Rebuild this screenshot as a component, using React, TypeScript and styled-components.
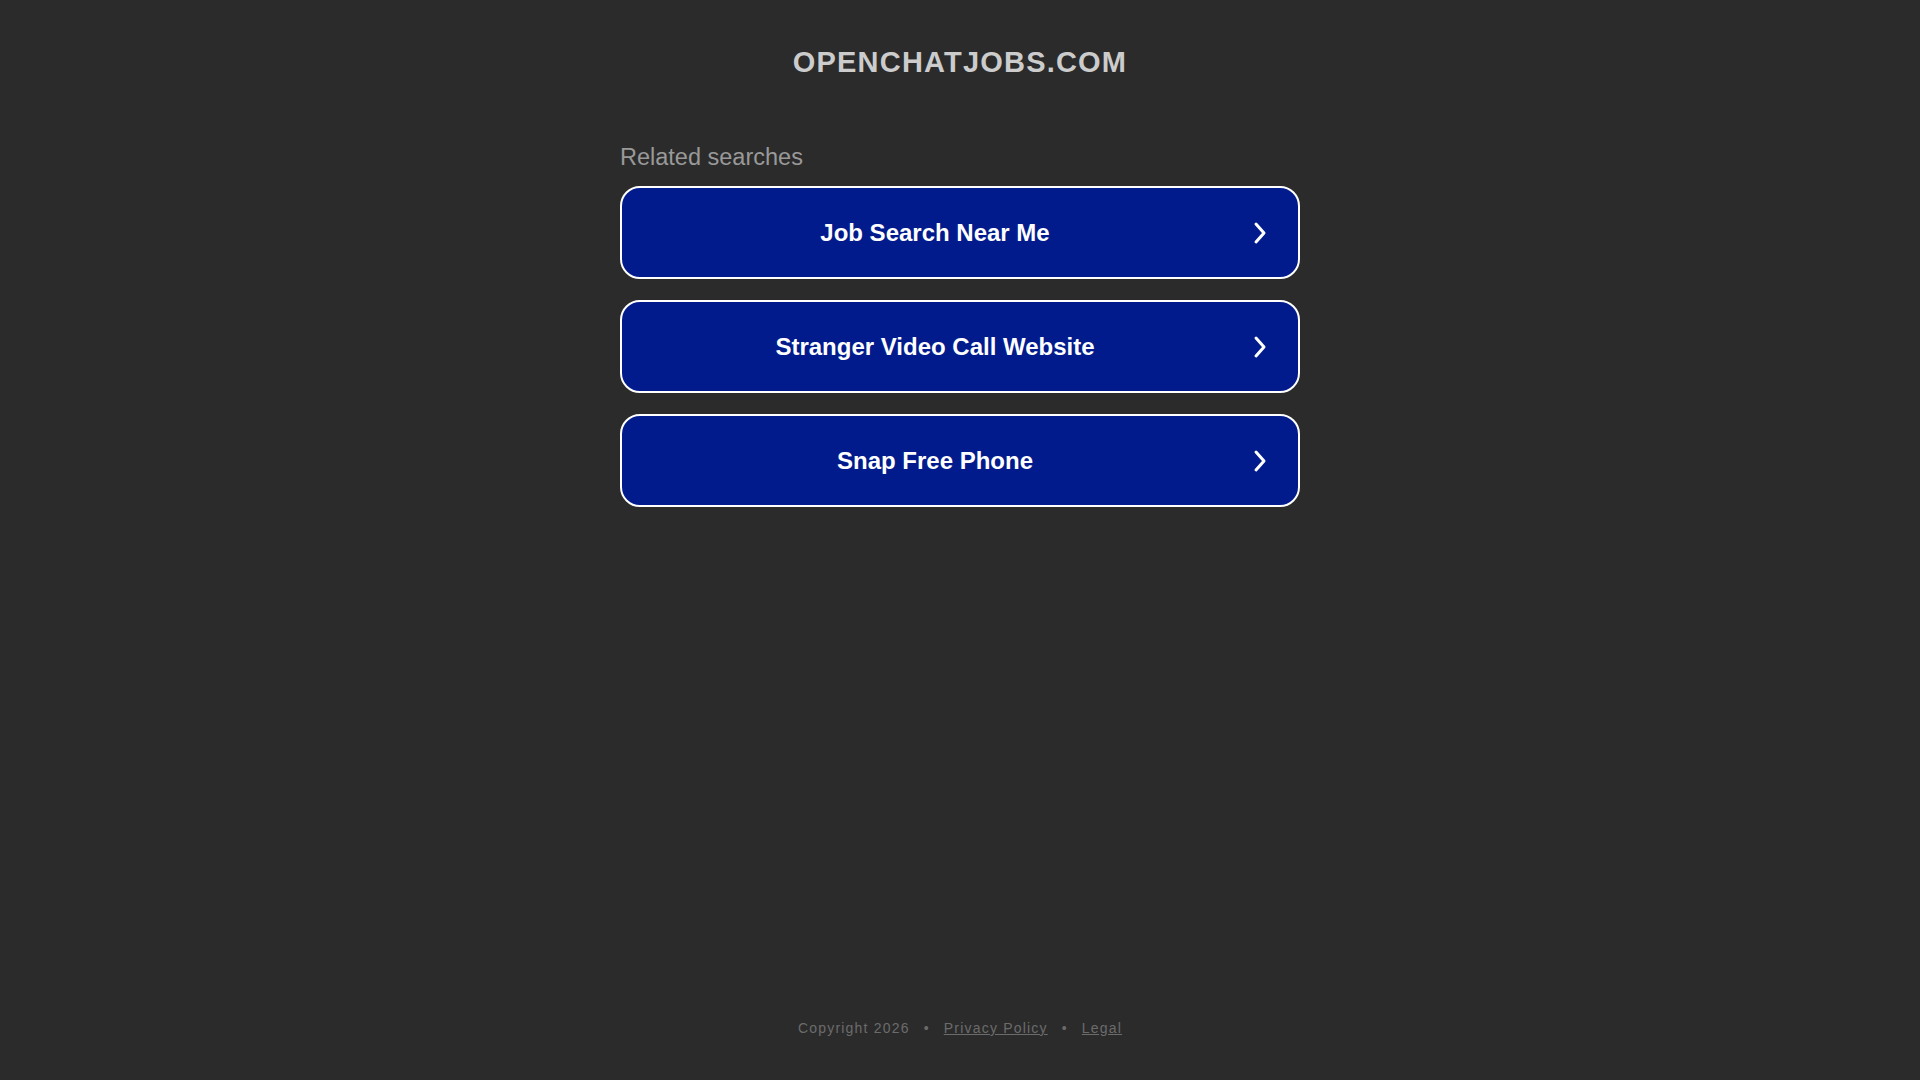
import styled, { createGlobalStyle } from "styled-components";

const GlobalStyle = createGlobalStyle`
  html, body {
    margin: 0;
    padding: 0;
    background: #2b2b2b;
  }
  body {
    font-family: "Liberation Sans", Arial, sans-serif;
  }
`;

const Page = styled.div`
  min-height: 100vh;
  display: flex;
  flex-direction: column;
  align-items: center;
  box-sizing: border-box;
`;

const Domain = styled.h1`
  margin: 45px 0 0;
  font-size: 29px;
  line-height: 34px;
  font-weight: 700;
  letter-spacing: 1.2px;
  color: #cccccc;
  text-transform: uppercase;
`;

const Searches = styled.section`
  width: 680px;
  margin-top: 64px;
  display: flex;
  flex-direction: column;
`;

const SearchesTitle = styled.h2`
  margin: 0 0 15px;
  font-size: 23.5px;
  line-height: 28px;
  font-weight: 400;
  color: #999999;
`;

const SearchList = styled.div`
  display: flex;
  flex-direction: column;
  gap: 21px;
`;

const SearchLink = styled.a`
  display: flex;
  align-items: center;
  height: 93px;
  box-sizing: border-box;
  padding: 0 26px 0 0;
  border: 2px solid #ffffff;
  border-radius: 20px;
  background: #011b8c;
  color: #ffffff;
  text-decoration: none;
  cursor: pointer;
`;

const SearchLabel = styled.span`
  flex: 1;
  text-align: center;
  font-size: 24px;
  font-weight: 700;
`;

const Arrow = styled.svg`
  width: 24px;
  height: 24px;
  flex: none;
`;

const Footer = styled.footer`
  margin-top: auto;
  padding-bottom: 44px;
  font-size: 14px;
  letter-spacing: 1.2px;
  color: #6b6b6b;
  display: flex;
  align-items: center;
  gap: 14px;
`;

const FooterLink = styled.a`
  color: #6b6b6b;
  text-decoration: underline;
`;

const searches = ["Job Search Near Me", "Stranger Video Call Website", "Snap Free Phone"];

export default function App() {
  return (
    <>
      <GlobalStyle />
      <Page>
        <Domain>openchatjobs.com</Domain>
        <Searches>
          <SearchesTitle>Related searches</SearchesTitle>
          <SearchList>
            {searches.map((s) => (
              <SearchLink key={s}>
                <SearchLabel>{s}</SearchLabel>
                <Arrow viewBox="0 0 24 24" fill="none">
                  <polyline
                    points="8,3 16,12 8,21"
                    stroke="#ffffff"
                    strokeWidth="3"
                    strokeLinecap="round"
                    strokeLinejoin="round"
                  />
                </Arrow>
              </SearchLink>
            ))}
          </SearchList>
        </Searches>
        <Footer>
          <span>Copyright 2026</span>
          <span>•</span>
          <FooterLink>Privacy Policy</FooterLink>
          <span>•</span>
          <FooterLink>Legal</FooterLink>
        </Footer>
      </Page>
    </>
  );
}
